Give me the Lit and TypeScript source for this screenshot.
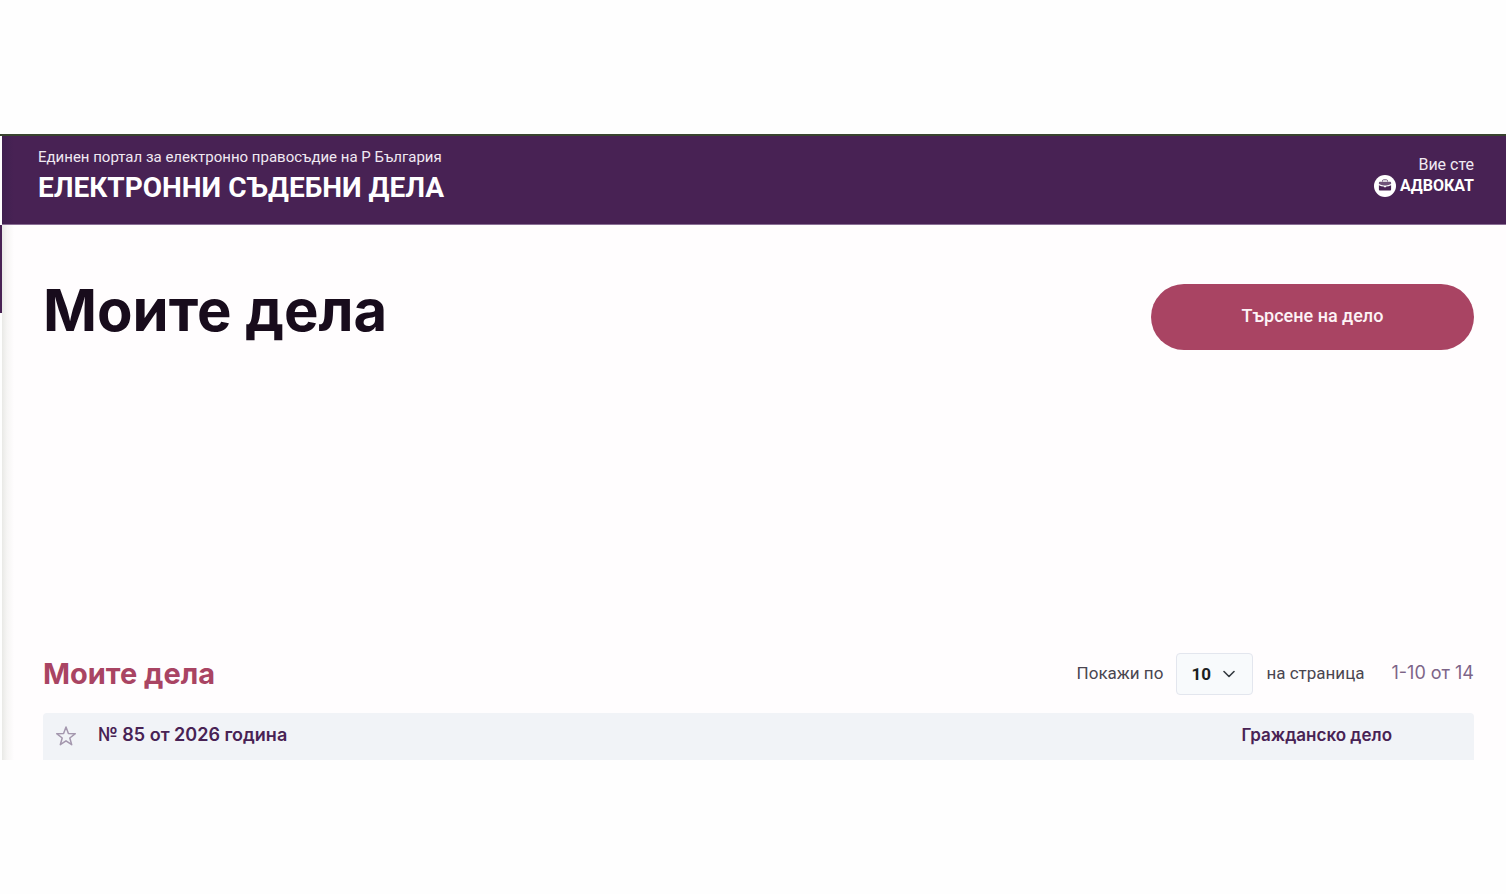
import { LitElement, html, css } from "lit";
import { customElement, state } from "lit/decorators.js";

interface CourtCase {
  title: string;
  kind: string;
}

@customElement("app-root")
export class AppRoot extends LitElement {
  @state() private pageSize = "10";
  @state() private cases: CourtCase[] = [
    { title: "№ 85 от 2026 година", kind: "Гражданско дело" },
  ];

  static styles = css`
    :host {
      display: block;
      background: #fefefe;
      font-family: Roboto, "Noto Sans", sans-serif;
      color: #180c1c;
    }
    .page {
      padding: 134px 0;
    }
    .frame {
      display: grid;
      grid-template-columns: 2px 1fr;
      grid-template-rows: auto auto;
      border-top: 2px solid #39442f;
      box-sizing: border-box;
    }
    .rail {
      background: linear-gradient(#482254, #482254) no-repeat 0 0 / 2px 88px;
    }
    .header {
      display: flex;
      justify-content: space-between;
      align-items: flex-start;
      padding: 11px 32px 16px 36px;
      background: linear-gradient(90deg, #402050, #482254 12px);
      border-bottom: 1px solid #8a6f95;
      color: #fff;
    }
    .portal,
    .user {
      display: block;
      font-size: 15px;
      line-height: 20px;
      color: #f0e9f2;
    }
    .user {
      font-size: 16px;
    }
    .system {
      margin: 0;
      padding-top: 1px;
      font-size: 28px;
      line-height: 40px;
      font-weight: 700;
    }
    .who {
      text-align: right;
      padding-top: 8px;
    }
    .role {
      display: flex;
      align-items: center;
      gap: 4px;
      font-size: 16px;
      line-height: 20px;
      font-weight: 700;
    }
    .role svg {
      width: 22px;
      height: 22px;
    }
    .main {
      padding: 59px 32px 0 41px;
      background: linear-gradient(90deg, #e9e9e6, #f6f5f4 5px, #fffdfe 12px);
    }
    .top {
      display: flex;
      justify-content: space-between;
      align-items: flex-start;
    }
    h1,
    h2,
    .case,
    .range {
      font-family: Inter, Roboto, sans-serif;
    }
    h1 {
      margin: 0;
      font-size: 58px;
      line-height: 52px;
      font-weight: 700;
    }
    .search {
      width: 323px;
      height: 66px;
      border: 0;
      border-radius: 33px;
      background: #a94463;
      color: #fdf3f6;
      font: 500 18px/24px Roboto, "Noto Sans", sans-serif;
      padding: 0 0 2px;
    }
    .listhead {
      display: flex;
      justify-content: space-between;
      align-items: center;
      margin-top: 303px;
      color: #4a4650;
      font-size: 17px;
      line-height: 24px;
    }
    h2 {
      margin: 0;
      font-size: 29px;
      line-height: 40px;
      font-weight: 700;
      color: #a94463;
    }
    .pager {
      display: flex;
      align-items: center;
      gap: 13px;
    }
    .pager label,
    .pager .text {
      padding-bottom: 2px;
    }
    .select {
      display: grid;
      align-items: center;
    }
    .select select,
    .select svg {
      grid-area: 1 / 1;
    }
    .select svg {
      justify-self: end;
      width: 12px;
      height: 8px;
      margin-right: 18px;
      pointer-events: none;
    }
    select {
      appearance: none;
      width: 77px;
      height: 42px;
      padding: 0 0 0 14px;
      border: 1px solid #e3e6ee;
      border-radius: 4px;
      background: #f8fafc;
      color: #1c1f22;
      font: 700 17px/24px Roboto, "Noto Sans", sans-serif;
    }
    .pager .range {
      margin-left: 14px;
      font-size: 18px;
      color: #7d6488;
    }
    .case {
      display: flex;
      align-items: center;
      height: 47px;
      margin-top: 18px;
      padding: 0 82px 0 12px;
      border-radius: 4px 4px 0 0;
      background: #f1f3f7;
      font-size: 18px;
      line-height: 24px;
      font-weight: 600;
    }
    .case a {
      color: #482254;
      text-decoration: none;
      margin-left: 21px;
      padding-bottom: 4px;
    }
    .kind {
      margin-left: auto;
      color: #482254;
      font-size: 17px;
      padding-bottom: 4px;
    }
    .star {
      display: flex;
      padding: 0 0 2px;
      border: 0;
      background: none;
    }
  `;

  private onSize(e: Event) {
    this.pageSize = (e.target as HTMLSelectElement).value;
  }

  render() {
    return html`
      <div class="page" lang="bg">
        <div class="frame">
          <div></div>
          <header class="header">
            <div>
              <span class="portal">Единен портал за електронно правосъдие на Р България</span>
              <p class="system">ЕЛЕКТРОННИ СЪДЕБНИ ДЕЛА</p>
            </div>
            <div class="who">
              <span class="user">Вие сте</span>
              <span class="role">
                <svg viewBox="0 0 22 22" aria-hidden="true">
                  <circle cx="11" cy="11" r="11" fill="#fff" />
                  <path d="M8.500 6.500V5.800q0-1 1-1h3q1 0 1 1v.7" fill="none" stroke="#6f5379" />
                  <path d="M5.800 6.800h10.400q.9 0 .9.900v1.200q-2.500 1.300-5 1.500h-2.200q-2.500-.2-5-1.500V7.700q0-.9.900-.9z" fill="#6f5379" />
                  <path d="M4.900 10.200q2.300 1.200 5 1.400v.7h2.200v-.7q2.700-.2 5-1.400v4.400q0 .9-.9.9H5.800q-.9 0-.9-.9z" fill="#482254" />
                </svg>
                АДВОКАТ
              </span>
            </div>
          </header>
          <div class="rail"></div>
          <main class="main">
            <div class="top">
              <h1>Моите дела</h1>
              <button class="search" type="button">Търсене на дело</button>
            </div>
            <div class="listhead">
              <h2>Моите дела</h2>
              <div class="pager">
                <label for="size">Покажи по</label>
                <span class="select">
                  <select id="size" .value=${this.pageSize} @change=${this.onSize}>
                    <option>10</option>
                    <option>20</option>
                    <option>50</option>
                  </select>
                  <svg viewBox="0 0 12 8" aria-hidden="true">
                    <path d="M1 1.500l5 5 5-5" fill="none" stroke="#343a40" stroke-width="1.600" stroke-linecap="round" stroke-linejoin="round" />
                  </svg>
                </span>
                <span class="text">на страница</span>
                <span class="text range">1-10 от 14</span>
              </div>
            </div>
            ${this.cases.map(
              (c) => html`
                <div class="case">
                  <button class="star" type="button" aria-label="Добави в любими">
                    <svg viewBox="0 0 22 22" width="22" height="22" aria-hidden="true">
                      <path d="M11 2l2.400 6.500 6.900.200-5.500 4.300 1.900 6.700-5.700-3.900-5.700 3.900 1.900-6.700L1.700 8.700l6.900-.200z" fill="none" stroke="#a497ae" stroke-width="1.500" stroke-linejoin="round" />
                    </svg>
                  </button>
                  <a href="#">${c.title}</a>
                  <span class="kind">${c.kind}</span>
                </div>
              `
            )}
          </main>
        </div>
      </div>
    `;
  }
}
